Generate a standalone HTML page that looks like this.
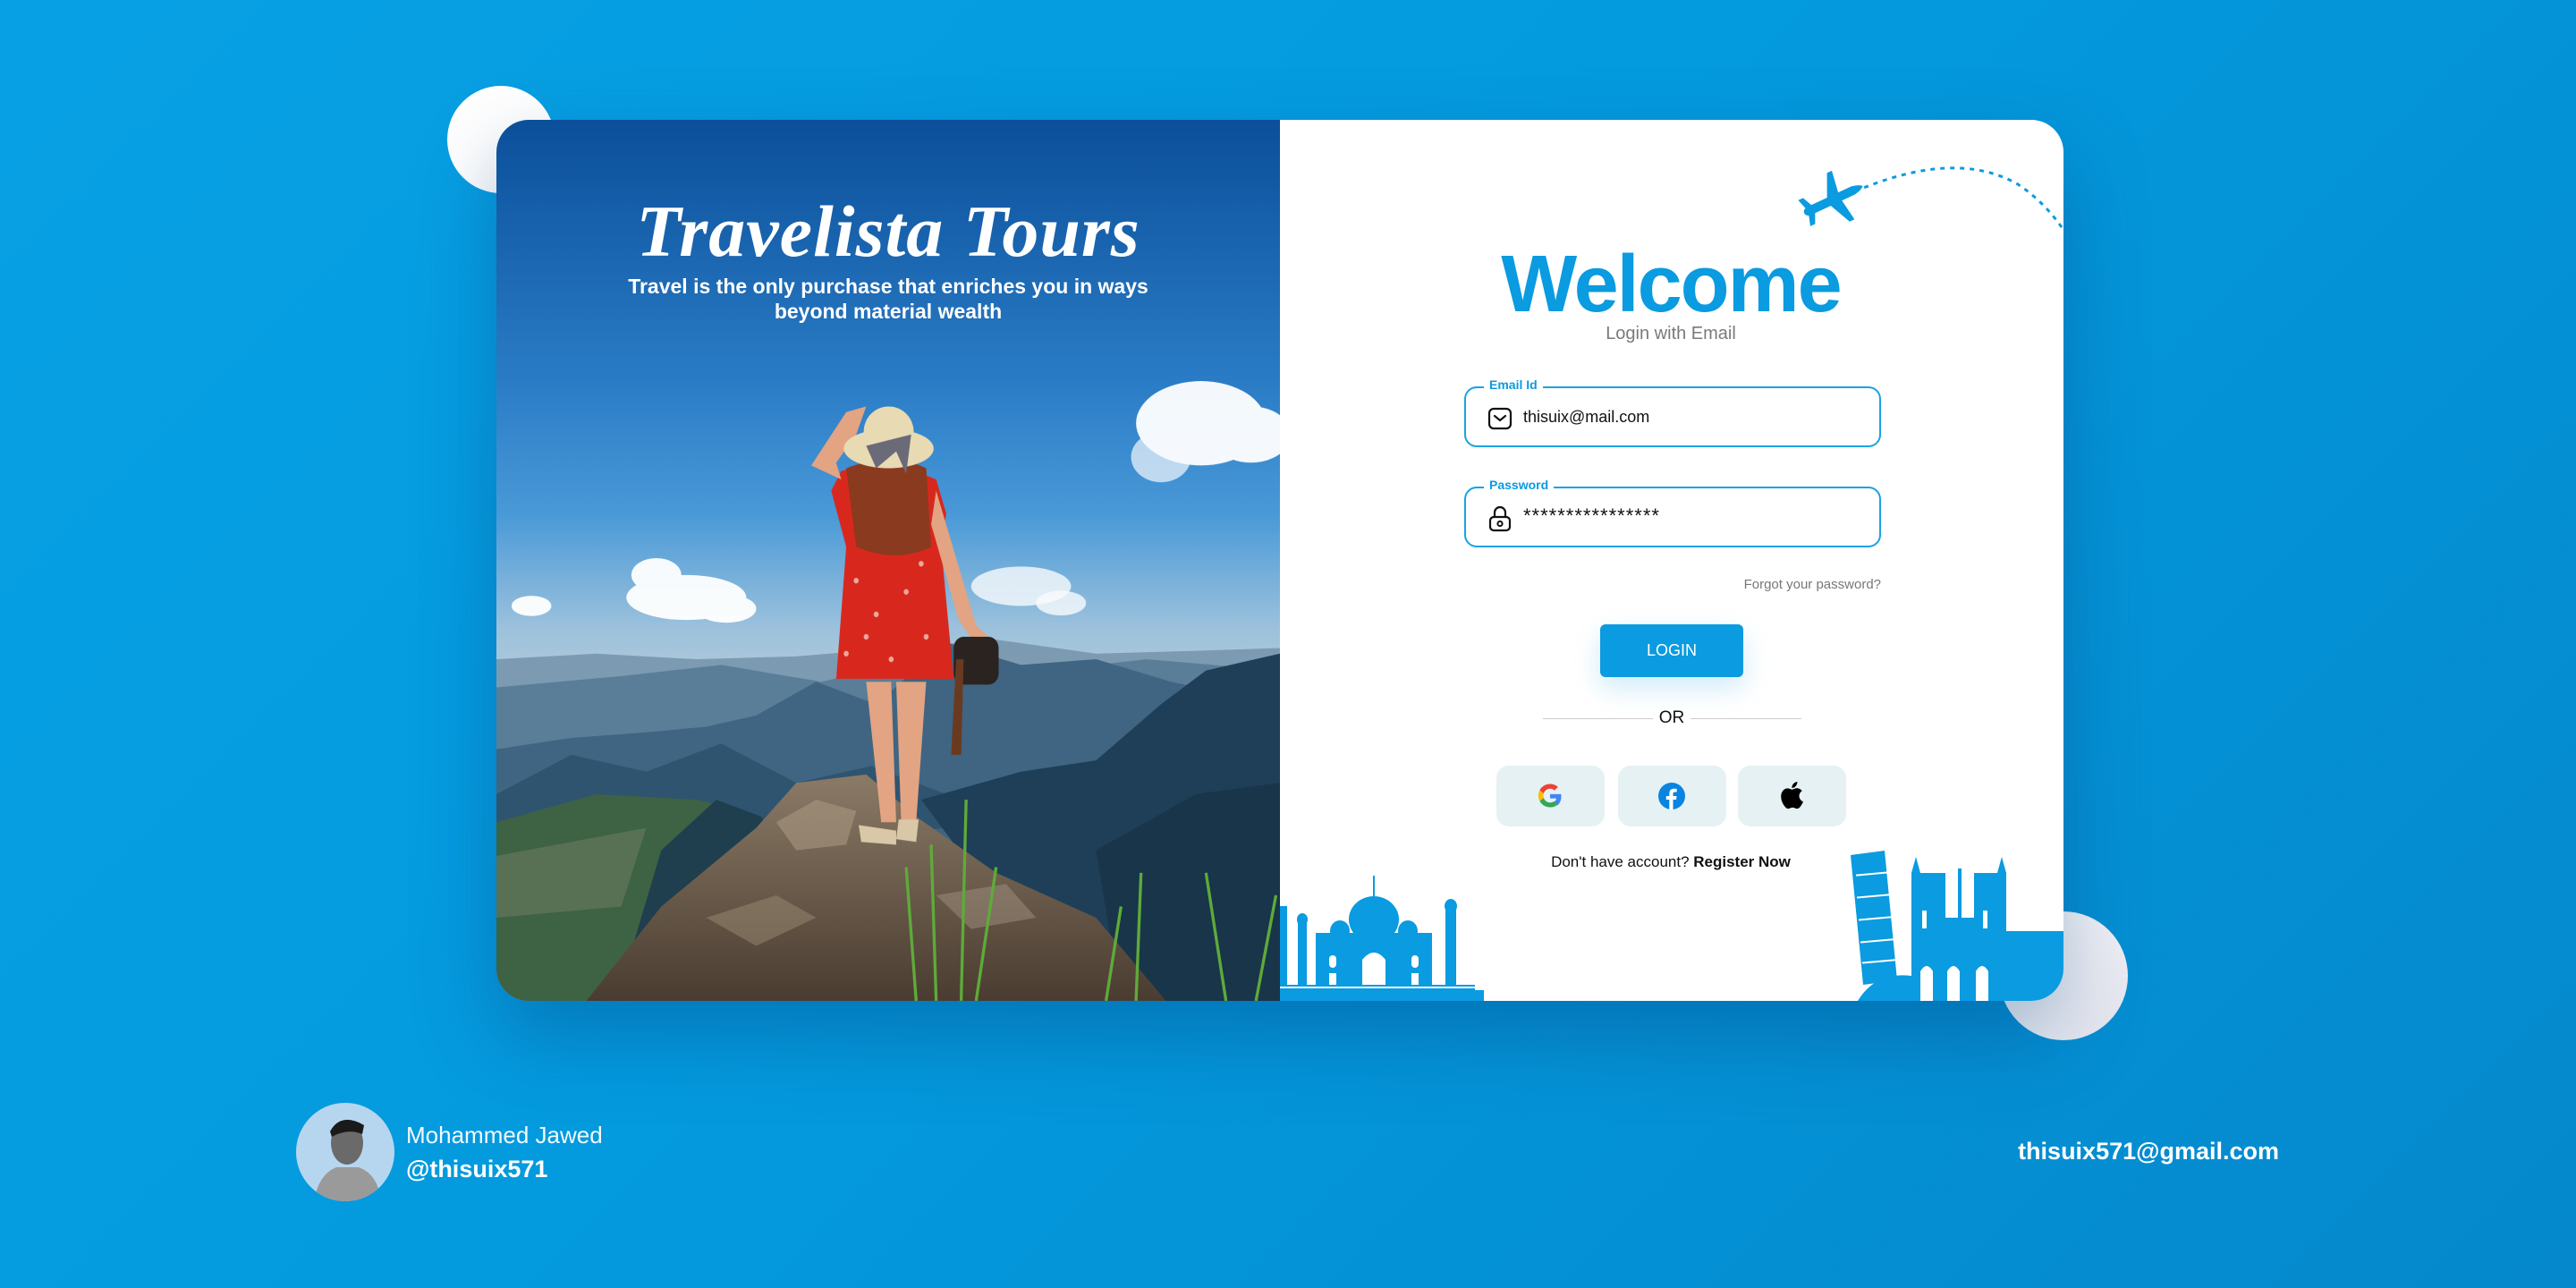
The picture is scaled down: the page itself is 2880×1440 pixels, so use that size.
<!DOCTYPE html>
<html><head><meta charset="utf-8"><style>
*{margin:0;padding:0;box-sizing:border-box}
body{width:2880px;height:1440px;overflow:hidden;position:relative;font-family:"Liberation Sans",sans-serif;background:linear-gradient(135deg,#08a0e4 0%,#049ade 45%,#0588cc 100%)}
.abs{position:absolute}
.circ{position:absolute;border-radius:50%;background:#fff}
.card{position:absolute;left:555px;top:134px;width:1752px;height:985px;border-radius:36px;overflow:hidden;background:#fff;box-shadow:0 40px 90px rgba(0,60,120,.35)}
.photo{position:absolute;left:0;top:0;width:876px;height:985px}
.title{position:absolute;left:0;width:876px;text-align:center;color:#fff}
.field{position:absolute;left:1082px;width:466px;height:68px;border:2px solid #1aa3e3;border-radius:14px}
.field .lab{position:absolute;left:20px;top:-12px;background:#fff;padding:0 6px;color:#0a9be0;font-weight:bold;font-size:14px}
.field .val{position:absolute;left:64px;top:22px;font-size:18px;color:#111}
.soc{position:absolute;top:722px;width:121px;height:68px;border-radius:14px;background:#e6f1f4}
</style></head><body>
<div class="circ" style="left:500px;top:96px;width:120px;height:120px"></div>
<div class="circ" style="left:2235px;top:1019px;width:144px;height:144px;background:linear-gradient(135deg,#fff,#e4e4ee)"></div>
<div class="card">
<svg class="photo" viewBox="0 0 1568 1568" preserveAspectRatio="none">
<defs>
<linearGradient id="sky" x1="0" y1="0" x2="0" y2="1"><stop offset="0" stop-color="#0b4f9a"/><stop offset=".3" stop-color="#2a7cc6"/><stop offset=".45" stop-color="#4a9ad8"/><stop offset=".58" stop-color="#9ec2dc"/><stop offset=".65" stop-color="#b2cad8"/></linearGradient>
<linearGradient id="rock" x1="0" y1="0" x2="0" y2="1"><stop offset="0" stop-color="#8a7a66"/><stop offset="1" stop-color="#4a3c30"/></linearGradient>
</defs>
<rect width="1568" height="1568" fill="url(#sky)"/>
<g fill="#fff" opacity=".95">
<ellipse cx="1410" cy="540" rx="130" ry="75"/><ellipse cx="1510" cy="560" rx="80" ry="50"/><ellipse cx="1330" cy="600" rx="60" ry="45" opacity=".7"/>
<ellipse cx="380" cy="850" rx="120" ry="40"/><ellipse cx="320" cy="810" rx="50" ry="30"/><ellipse cx="460" cy="870" rx="60" ry="25"/>
<ellipse cx="70" cy="865" rx="40" ry="18"/><ellipse cx="1050" cy="830" rx="100" ry="35" opacity=".8"/><ellipse cx="1130" cy="860" rx="50" ry="22" opacity=".8"/>
</g>
<path d="M0 960 L200 950 L400 960 L600 955 L800 940 L1000 925 L1200 950 L1400 945 L1568 940 L1568 1568 L0 1568Z" fill="#7c9bb2"/>
<path d="M0 1010 L250 990 L450 970 L650 1000 L900 950 L1100 980 L1300 960 L1568 980 L1568 1568 L0 1568Z" fill="#5a7e98"/>
<path d="M0 1120 L150 1100 L300 1090 L420 1080 L520 1060 L640 1000 L760 1040 L900 930 L1050 970 L1200 960 L1350 1000 L1568 1040 L1568 1568 L0 1568Z" fill="#3f6582"/>
<path d="M0 1200 L150 1130 L300 1160 L450 1110 L600 1180 L750 1150 L900 1200 L1000 1250 L0 1350Z" fill="#2f5470"/>
<path d="M0 1250 L200 1200 L400 1210 L500 1230 L600 1300 L500 1568 L0 1568Z" fill="#3d6244"/>
<path d="M0 1310 L300 1260 L250 1400 L0 1420Z" fill="#6a7a5e" opacity=".6"/>
<path d="M240 1568 L330 1300 L440 1210 L530 1240 L600 1330 L520 1568Z" fill="#1f3e4e"/>
<path d="M850 1210 L1050 1160 L1200 1140 L1330 1040 L1420 980 L1568 950 L1568 1568 L1150 1568 Z" fill="#1e3f57"/>
<path d="M1200 1300 L1400 1200 L1568 1180 L1568 1568 L1250 1568Z" fill="#18354a"/>
<path d="M180 1568 L330 1400 L520 1260 L600 1180 L740 1165 L840 1240 L1000 1340 L1200 1420 L1340 1568Z" fill="url(#rock)"/>
<path d="M560 1250 L640 1210 L720 1230 L700 1290 L600 1300Z" fill="#a89880" opacity=".6"/>
<path d="M420 1420 L560 1380 L640 1420 L520 1470Z" fill="#9a8a72" opacity=".5"/>
<path d="M880 1380 L1020 1360 L1080 1420 L950 1440Z" fill="#a09080" opacity=".5"/>
<g stroke="#5faa3a" stroke-width="6" fill="none">
<path d="M930 1568 L940 1210"/><path d="M880 1568 L870 1290"/><path d="M840 1568 L820 1330"/><path d="M960 1568 L1000 1330"/><path d="M1280 1568 L1290 1340"/><path d="M1460 1568 L1420 1340"/><path d="M1520 1568 L1560 1380"/><path d="M1220 1568 L1250 1400"/>
</g>
<path d="M740 1000 L770 1250 L800 1250 L790 1000Z M800 1000 L810 1250 L840 1250 L860 1000Z" fill="#e2a482"/>
<path d="M725 1255 L800 1265 L800 1290 L730 1285Z M805 1245 L845 1245 L840 1285 L800 1280Z" fill="#d8c8a8"/>
<path d="M690 625 Q780 600 880 640 L900 700 L890 760 L915 995 L680 995 L700 760 L670 660Z" fill="#d8281e"/>
<g fill="#f4e0d0" opacity=".7"><circle cx="720" cy="820" r="5"/><circle cx="760" cy="880" r="5"/><circle cx="820" cy="840" r="5"/><circle cx="860" cy="920" r="5"/><circle cx="700" cy="950" r="5"/><circle cx="790" cy="960" r="5"/><circle cx="850" cy="790" r="5"/><circle cx="740" cy="920" r="5"/></g>
<path d="M700 620 Q790 590 860 620 L870 760 Q800 790 720 760Z" fill="#8a3a1e"/>
<path d="M880 660 L960 900 L985 920 L960 935 L925 890 L870 720Z" fill="#e2a482"/>
<path d="M690 640 L630 615 L700 520 L740 510 L720 560 L680 610Z" fill="#e2a482"/>
<ellipse cx="785" cy="585" rx="90" ry="35" fill="#e8dab2"/>
<ellipse cx="785" cy="555" rx="50" ry="45" fill="#e8dab2"/>
<path d="M740 580 L830 560 L820 630 L800 590 L760 620Z" fill="#6a6a78"/>
<rect x="915" y="920" width="90" height="85" rx="20" fill="#2a2320"/>
<path d="M920 960 L910 1130 L930 1130 L935 960Z" fill="#6a3a20"/>
</svg>
<div class="title" style="top:78px;font-family:'Liberation Serif',serif;font-style:italic;font-weight:bold;font-size:82px;letter-spacing:1px">Travelista Tours</div>
<div class="title" style="top:172px;font-size:23px;font-weight:bold;line-height:28px">Travel is the only purchase that enriches you in ways<br>beyond material wealth</div>

<svg class="abs" style="left:1401px;top:22px" width="351" height="140" viewBox="0 0 351 140">
<path d="M118 58 Q230 10 300 50 Q330 70 351 101" fill="none" stroke="#0a9be0" stroke-width="3" stroke-dasharray="5 6"/>
<g transform="translate(92 68) rotate(-25)" fill="#0a9be0">
<path d="M-34 0 Q-34 -5 -26 -5 L26 -5 Q36 -3 38 0 Q36 3 26 5 L-26 5 Q-34 5 -34 0Z"/>
<path d="M-4 -4 L8 -30 L14 -30 L10 -4Z M-4 4 L8 30 L14 30 L10 4Z"/>
<path d="M-30 -3 L-34 -16 L-28 -16 L-22 -3Z M-30 3 L-34 16 L-28 16 L-22 3Z"/>
</g></svg>

<div class="abs" style="left:880px;top:139px;width:866px;text-align:center;color:#0a9be0;font-weight:bold;font-size:90px;line-height:1;letter-spacing:-2px">Welcome</div>
<div class="abs" style="left:880px;top:228px;width:866px;text-align:center;color:#7a7a7a;font-size:20px">Login with Email</div>

<div class="field" style="top:298px"><span class="lab">Email Id</span>
<svg class="abs" style="left:24px;top:20px" width="28" height="28" viewBox="0 0 28 28"><rect x="2" y="3" width="24" height="22" rx="5" fill="none" stroke="#111" stroke-width="2.2"/><path d="M8 11 L14 16 L20 11" fill="none" stroke="#111" stroke-width="2.2" stroke-linecap="round"/></svg>
<span class="val">thisuix@mail.com</span></div>
<div class="field" style="top:410px"><span class="lab">Password</span>
<svg class="abs" style="left:24px;top:18px" width="28" height="32" viewBox="0 0 28 32"><path d="M8 14 V9 a6 6 0 0 1 12 0 V14" fill="none" stroke="#111" stroke-width="2.2"/><rect x="3" y="14" width="22" height="15" rx="4" fill="none" stroke="#111" stroke-width="2.2"/><circle cx="14" cy="21.5" r="2.6" fill="none" stroke="#111" stroke-width="2"/></svg>
<span class="val" style="top:18px;font-size:22px;letter-spacing:1px">****************</span></div>
<div class="abs" style="left:1082px;top:511px;width:466px;text-align:right;color:#777;font-size:15px">Forgot your password?</div>
<div class="abs" style="left:1234px;top:564px;width:160px;height:59px;border-radius:6px;background:#0a9be0;color:#fff;font-size:18px;text-align:center;line-height:59px;box-shadow:0 12px 30px rgba(10,155,224,.2)">LOGIN</div>
<div class="abs" style="left:1170px;top:669px;width:123px;height:1px;background:#ccc"></div>
<div class="abs" style="left:1335px;top:669px;width:124px;height:1px;background:#ccc"></div>
<div class="abs" style="left:1293px;top:658px;width:42px;text-align:center;font-size:19px;color:#111">OR</div>

<div class="soc" style="left:1118px"><svg class="abs" style="left:45px;top:19px" width="30" height="30" viewBox="0 0 48 48"><path d="M44 24.5c0-1.6-.1-2.8-.4-4H24v7.6h11.3c-.5 2.8-2.1 5.2-4.6 6.8l7 5.4C41.8 36.3 44 30.9 44 24.5z" fill="#4285F4"/><path d="M24 44c5.7 0 10.4-1.9 13.8-5.1l-7-5.4c-1.9 1.3-4.3 2.1-6.8 2.1-5.3 0-9.8-3.6-11.4-8.4l-7.2 5.6C8.7 39.5 15.8 44 24 44z" fill="#34A853"/><path d="M12.6 27.2c-.4-1.3-.7-2.6-.7-4s.3-2.8.7-4l-7.2-5.6C3.9 16.6 3 19.8 3 23.2s.9 6.6 2.4 9.6z" fill="#FBBC05"/><path d="M24 10.8c3.1 0 5.8 1.1 7.9 3.1l6.2-6.2C34.4 4.3 29.7 2.4 24 2.4 15.8 2.4 8.7 7 5.4 13.6l7.2 5.6c1.6-4.8 6.1-8.4 11.4-8.4z" fill="#EA4335"/></svg></div>
<div class="soc" style="left:1254px"><svg class="abs" style="left:45px;top:19px" width="30" height="30" viewBox="0 0 30 30"><circle cx="15" cy="15" r="15" fill="#0a84e0"/><path d="M16.5 30V19h3.5l.6-4h-4.1v-2.5c0-1.2.4-2 2-2h2.2V7c-.4 0-1.7-.2-3.2-.2-3.1 0-5.2 1.9-5.2 5.4V15H8.8v4h3.5v11z" fill="#fff"/></svg></div>
<div class="soc" style="left:1388px"><svg class="abs" style="left:47px;top:17px" width="26" height="32" viewBox="0 0 26 32"><path d="M21.5 17c0-3.8 3.1-5.6 3.2-5.7-1.8-2.6-4.5-2.9-5.5-3-2.3-.2-4.5 1.4-5.7 1.4-1.2 0-3-1.3-4.9-1.3C6.1 8.4 3.8 9.9 2.5 12.2c-2.7 4.6-.7 11.4 1.9 15.1 1.3 1.8 2.8 3.9 4.8 3.8 1.9-.1 2.7-1.2 5-1.2s3 1.2 5 1.2c2.1 0 3.4-1.9 4.6-3.7 1.5-2.1 2.1-4.1 2.1-4.2 0 0-4.3-1.6-4.4-6.2zM17.8 5.7c1-1.3 1.8-3 1.6-4.7-1.5.1-3.3 1-4.4 2.3-1 1.1-1.8 2.9-1.6 4.6 1.7.1 3.4-.9 4.4-2.2z" fill="#000"/></svg></div>
<div class="abs" style="left:880px;top:820px;width:866px;text-align:center;font-size:17px;color:#111">Don't have account? <b>Register Now</b></div>

<svg class="abs" style="left:876px;top:839px" width="228" height="146" viewBox="0 0 228 146" fill="#0a9be0">
<rect x="0" y="134" width="228" height="12"/><rect x="0" y="128" width="218" height="6"/>
<rect x="40" y="70" width="130" height="58"/><ellipse cx="105" cy="55" rx="28" ry="26"/><rect x="104" y="6" width="2" height="25"/>
<rect x="20" y="55" width="10" height="73"/><rect x="185" y="40" width="12" height="88"/><ellipse cx="191" cy="40" rx="7" ry="8"/><ellipse cx="25" cy="55" rx="6" ry="7"/>
<ellipse cx="67" cy="68" rx="11" ry="12"/><ellipse cx="143" cy="68" rx="11" ry="12"/><rect x="0" y="40" width="8" height="88"/>
<g fill="#fff"><path d="M92 128 V100 Q105 84 118 100 V128Z"/><rect x="55" y="95" width="8" height="14" rx="4"/><rect x="147" y="95" width="8" height="14" rx="4"/><rect x="55" y="115" width="8" height="13"/><rect x="147" y="115" width="8" height="13"/><rect x="0" y="130" width="228" height="2"/></g>
</svg>
<svg class="abs" style="left:1502px;top:812px" width="250" height="173" viewBox="0 0 250 173" fill="#0a9be0">
<path d="M20 173 Q40 140 80 145 Q110 150 130 173Z"/>
<path d="M12 10 L50 5 L64 150 L26 155Z"/>
<g fill="#fff"><rect x="18" y="30" width="36" height="2" transform="rotate(-5 36 31)"/><rect x="19" y="55" width="37" height="2" transform="rotate(-5 36 56)"/><rect x="21" y="80" width="37" height="2" transform="rotate(-5 38 81)"/><rect x="23" y="105" width="37" height="2" transform="rotate(-5 40 106)"/><rect x="25" y="128" width="37" height="2" transform="rotate(-5 42 129)"/></g>
<rect x="80" y="30" width="38" height="143"/><rect x="150" y="30" width="36" height="143"/><path d="M80 30 L85 12 L90 30Z M176 30 L181 12 L186 30Z"/>
<rect x="118" y="80" width="32" height="93"/><rect x="132" y="25" width="4" height="60"/>
<rect x="186" y="95" width="64" height="78"/>
<g fill="#fff"><path d="M90 173 V140 Q97 128 104 140 V173Z M120 173 V140 Q127 128 134 140 V173Z M152 173 V140 Q159 128 166 140 V173Z"/><rect x="92" y="72" width="5" height="20"/><rect x="160" y="72" width="5" height="20"/></g>
</svg>
</div>

<div class="circ" style="left:331px;top:1233px;width:110px;height:110px;background:#b6d6f0;overflow:hidden">
<svg width="110" height="110" viewBox="0 0 110 110"><path d="M20 110 Q25 80 45 72 L70 72 Q92 80 95 110Z" fill="#9a9a9a"/><ellipse cx="57" cy="45" rx="18" ry="24" fill="#6a6a6a"/><path d="M38 32 Q50 10 76 25 L74 35 Q58 28 40 38Z" fill="#1a1a1a"/></svg></div>
<div class="abs" style="left:454px;top:1254px;color:#fff;font-size:26px;font-weight:300;opacity:.95">Mohammed Jawed</div>
<div class="abs" style="left:454px;top:1292px;color:#fff;font-size:27px;font-weight:bold">@thisuix571</div>
<div class="abs" style="left:2148px;top:1272px;width:400px;text-align:right;color:#fff;font-size:27px;font-weight:bold">thisuix571@gmail.com</div>
</body></html>
